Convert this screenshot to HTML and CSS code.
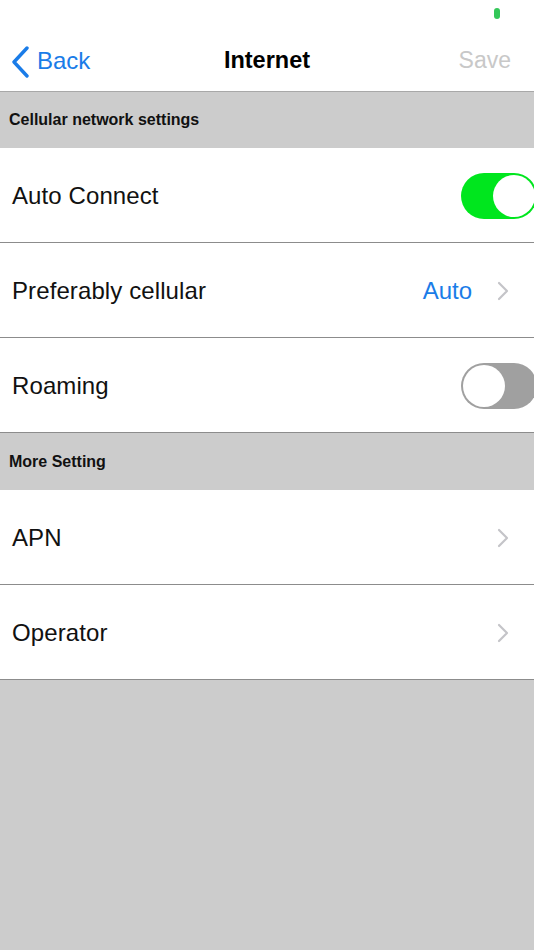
FILE: index.html
```html
<!DOCTYPE html>
<html>
<head>
<meta charset="utf-8">
<link rel="stylesheet" href="styles.css">
</head>
<body>
<div class="screen">
  <div class="status"><span class="dot"></span></div>
  <div class="nav">
    <div class="back">
      <svg class="back-icon" width="20" height="32" viewBox="0 0 20 32"><path d="M16 2 L3 16 L16 30" fill="none" stroke="#1a7ce8" stroke-width="3.4" stroke-linecap="round" stroke-linejoin="round"/></svg>
      <span>Back</span>
    </div>
    <div class="title">Internet</div>
    <div class="save">Save</div>
  </div>
  <div class="section">Cellular network settings</div>
  <div class="row">
    <span class="label">Auto Connect</span>
    <span class="switch on"><span class="knob"></span></span>
  </div>
  <div class="row">
    <span class="label">Preferably cellular</span>
    <span class="right"><span class="value">Auto</span><svg class="chev" width="12" height="20" viewBox="0 0 12 20"><path d="M2 2 L10 10 L2 18" fill="none" stroke="#c4c4c8" stroke-width="2.2" stroke-linecap="round" stroke-linejoin="round"/></svg></span>
  </div>
  <div class="row">
    <span class="label">Roaming</span>
    <span class="switch off"><span class="knob"></span></span>
  </div>
  <div class="section tall">More Setting</div>
  <div class="row">
    <span class="label">APN</span>
    <span class="right"><svg class="chev" width="12" height="20" viewBox="0 0 12 20"><path d="M2 2 L10 10 L2 18" fill="none" stroke="#c4c4c8" stroke-width="2.2" stroke-linecap="round" stroke-linejoin="round"/></svg></span>
  </div>
  <div class="row">
    <span class="label">Operator</span>
    <span class="right"><svg class="chev" width="12" height="20" viewBox="0 0 12 20"><path d="M2 2 L10 10 L2 18" fill="none" stroke="#c4c4c8" stroke-width="2.2" stroke-linecap="round" stroke-linejoin="round"/></svg></span>
  </div>
  <div class="filler"></div>
</div>
</body>
</html>
```
FILE: styles.css
```css
html, body {
  margin: 0;
  padding: 0;
}
body {
  width: 534px;
  height: 950px;
  overflow: hidden;
  background: #cccccc;
  font-family: "Liberation Sans", Arial, Helvetica, sans-serif;
}
.screen {
  display: flex;
  flex-direction: column;
  width: 534px;
  height: 950px;
  overflow: hidden;
}
.status {
  height: 28px;
  flex-shrink: 0;
  background: #ffffff;
  display: flex;
  justify-content: flex-end;
  align-items: flex-start;
  padding-right: 34px;
}
.dot {
  display: block;
  width: 6px;
  height: 11px;
  margin-top: 8px;
  border-radius: 3px;
  background: #34c759;
}
.nav {
  height: 61px;
  padding: 2px 23px 0 11px;
  flex-shrink: 0;
  background: #ffffff;
  border-bottom: 1px solid #a8a8a8;
  display: grid;
  grid-template-columns: 1fr auto 1fr;
  align-items: center;
}
.back {
  display: flex;
  align-items: center;
  gap: 6px;
  color: #1a7ce8;
  font-size: 24px;
}
.back-icon {
  display: block;
  margin-top: 2px;
}
.title {
  font-size: 23.5px;
  font-weight: bold;
  color: #000000;
  margin-left: 12px;
}
.save {
  text-align: right;
  font-size: 23px;
  color: #c8c8c8;
}
.section {
  height: 56px;
  flex-shrink: 0;
  display: flex;
  align-items: center;
  padding-left: 9px;
  background: #cccccc;
  font-size: 16px;
  font-weight: bold;
  color: #111111;
}
.section.tall {
  height: 57px;
}
.row {
  height: 93px;
  padding-top: 1px;
  flex-shrink: 0;
  background: #ffffff;
  border-bottom: 1px solid #8c8c8c;
  display: flex;
  align-items: center;
  justify-content: space-between;
  padding-left: 12px;
}
.label {
  font-size: 24px;
  color: #111111;
  letter-spacing: 0.1px;
}
.right {
  display: flex;
  align-items: center;
  gap: 25px;
  padding-right: 25px;
}
.value {
  font-size: 24px;
  color: #1a7ce8;
}
.chev {
  display: block;
}
.switch {
  position: relative;
  display: block;
  width: 76px;
  height: 46px;
  border-radius: 23px;
  margin-right: -3px;
  box-sizing: border-box;
}
.switch.on {
  background: #00e61e;
}
.switch.off {
  background: #a0a0a0;
}
.knob {
  position: absolute;
  top: 2px;
  width: 42px;
  height: 42px;
  border-radius: 50%;
  background: #ffffff;
}
.switch.on .knob {
  right: 2px;
}
.switch.off .knob {
  left: 2px;
}
.filler {
  flex: 1;
  background: #cccccc;
}
```
